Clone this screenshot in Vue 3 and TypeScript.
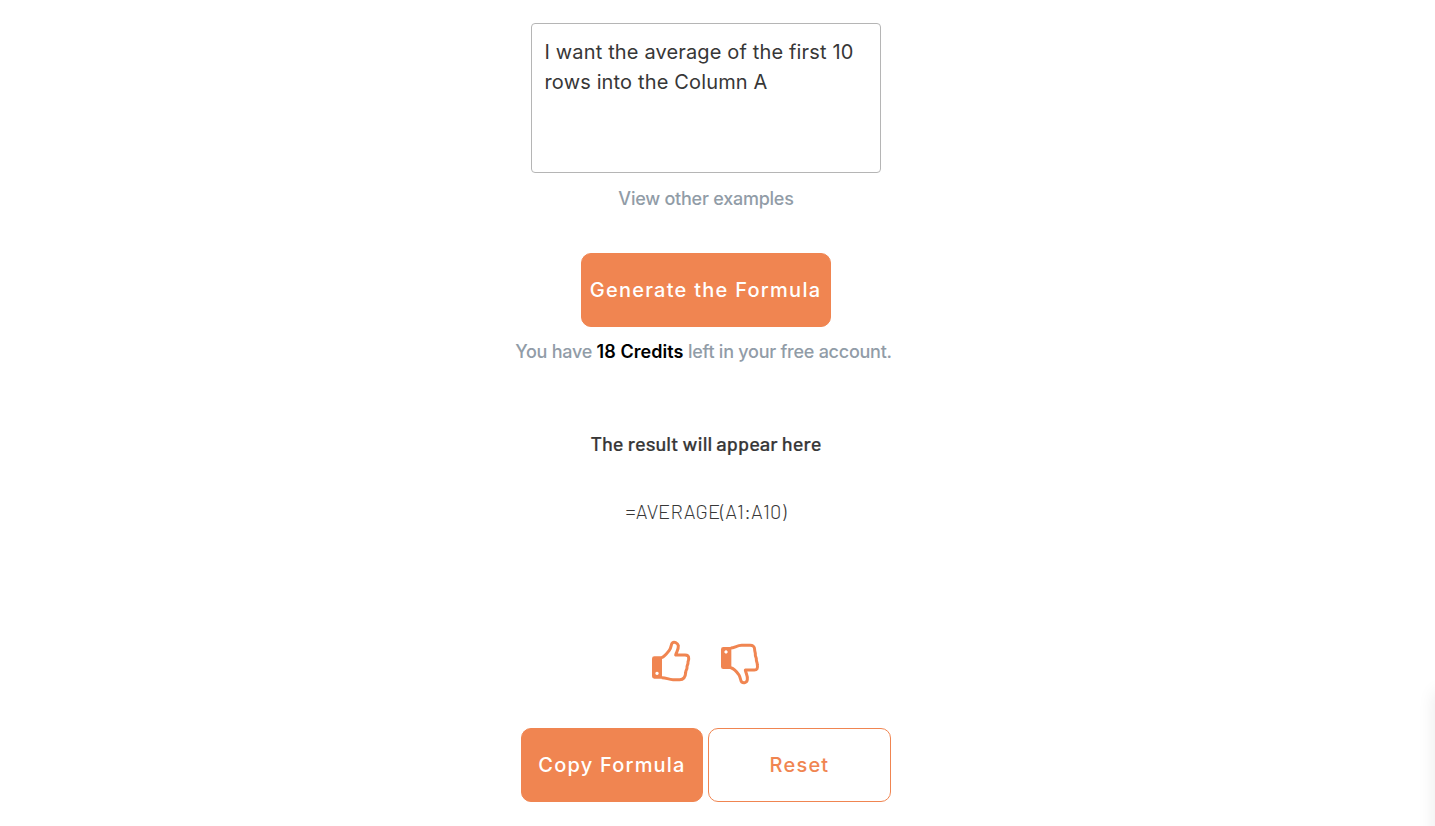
<template>
  <main class="generator">
    <textarea v-model="prompt" class="prompt" spellcheck="false"></textarea>
    <a class="examples">View other examples</a>

    <button class="btn btn--generate" type="button">Generate the Formula</button>
    <p class="credits">
      You have <strong>{{ credits }} Credits</strong> left in your free account.
    </p>

    <h2 class="result-title">The result will appear here</h2>
    <p class="result">{{ formula }}</p>

    <div class="votes">
      <svg class="vote" viewBox="33 30 120 129" aria-label="Good result">
        <path class="cuff" fill-rule="evenodd" d="M43 79H66V146H43Q36 146 36 139V86Q36 79 43 79ZM51 125a5 5 0 1 0 .1 0Z" />
        <path class="hand" d="M65 83C74 80 81 70 88 61C94 54 93 42 97 39C102 34 113 38 115 47C116 58 110 65 107 75H135Q147 75 146 86C147 91 143 94 144 99C144 104 140 107 141 113C141 119 137 121 137 128Q136 149 119 149H99C86 149 77 142 65 143" />
      </svg>
      <svg class="vote" viewBox="45 30 120 129" aria-label="Bad result">
        <path class="cuff" fill-rule="evenodd" d="M55 51H79V117H55Q48 117 48 110V58Q48 51 55 51ZM63 61a5 5 0 1 0 .1 0Z" />
        <path class="hand" d="M77 54C88 54 96 46 110 46H132Q149 44 149 59C149 66 152 68 151 75C151 81 155 83 154 89C154 95 157 97 157 104Q160 120 148 120H121C122 129 129 137 127 149C126 159 115 160 110 156C106 152 107 143 102 135C96 126 88 115 77 113" />
      </svg>
    </div>

    <div class="actions">
      <button class="btn btn--copy" type="button">Copy Formula</button>
      <button class="btn btn--reset" type="button">Reset</button>
    </div>
    <div class="edge-shadow" aria-hidden="true"></div>
  </main>
</template>

<script setup lang="ts">
import { ref } from 'vue'

const prompt = ref('I want the average of the first 10 rows into the Column A')
const credits = ref(18)
const formula = ref('=AVERAGE(A1:A10)')
</script>

<style>
body {
  background: #fff;
}
</style>

<style scoped>
.generator {
  position: relative;
  box-sizing: border-box;
  display: flex;
  flex-direction: column;
  align-items: center;
  width: 1435px;
  height: 826px;
  padding: 23px 23px 0 0;
  overflow: hidden;
  font-family: Inter, sans-serif;
}

.prompt {
  box-sizing: border-box;
  width: 350px;
  height: 150px;
  padding: 13px 12px 13px 12.5px;
  border: 1px solid #b5b5b5;
  border-radius: 4px;
  outline: none;
  resize: none;
  overflow: hidden;
  color: #373737;
  font: 400 20px/30px Inter, sans-serif;
  letter-spacing: 0.15px;
}

.examples {
  margin-top: 12px;
  color: #919ca7;
  font-size: 18px;
  font-weight: 500;
  line-height: 28px;
  letter-spacing: -0.24px;
}

.btn {
  box-sizing: border-box;
  height: 74px;
  padding: 0;
  border: 1px solid #f08551;
  border-radius: 10px;
  background: #f08551;
  color: #fff;
  font: 500 20px/30px Inter, sans-serif;
  letter-spacing: 1.2px;
  white-space: nowrap;
}

.btn--generate {
  width: 250px;
  margin-top: 40px;
  padding-right: 1px;
  letter-spacing: 1.26px;
}

.credits {
  margin: 11px 5px 0 0;
  color: #919ca7;
  font-size: 18px;
  font-weight: 500;
  line-height: 28px;
  letter-spacing: -0.25px;
  white-space: nowrap;
}

.credits strong {
  color: #000;
  font-weight: 600;
  letter-spacing: 0.04px;
}

.result-title {
  margin: 62px 0 0;
  color: #373737;
  font: 500 20px/30px Barlow, Roboto, sans-serif;
  letter-spacing: 0.08px;
  -webkit-text-stroke: 0.2px #373737;
}

.result {
  margin: 38px 0 0;
  color: #373737;
  font: 300 20px/30px Barlow, Roboto, sans-serif;
  letter-spacing: 0.15px;
}

.votes {
  display: flex;
  gap: 29px;
  margin: 114px 2px 0 0;
}

.vote {
  width: 40px;
  height: 43px;
  overflow: visible;
}

.cuff {
  fill: #f08551;
}

.hand {
  fill: none;
  stroke: #f08551;
  stroke-width: 9;
  stroke-linejoin: round;
}

.actions {
  display: flex;
  gap: 5px;
  margin-top: 45px;
}

.btn--copy {
  width: 182px;
}

.btn--reset {
  width: 183px;
  background: #fff;
  color: #f08551;
}

/* left edge of the panel docked just outside the viewport */
.edge-shadow {
  position: absolute;
  top: 692px;
  right: -20px;
  width: 20px;
  height: 180px;
  box-shadow: 0 0 18px rgba(0, 0, 0, 0.09);
}
</style>
